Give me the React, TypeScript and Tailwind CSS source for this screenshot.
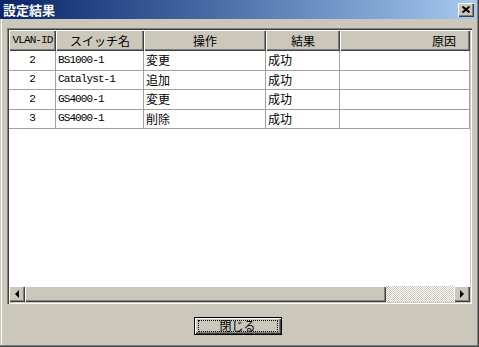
import React from "react";

const G = "#cbc7bb";

const cols = [
  { w: 47, label: "VLAN-ID", align: "center", mono: true },
  { w: 88, label: "スイッチ名", align: "center" },
  { w: 122, label: "操作", align: "center" },
  { w: 74, label: "結果", align: "center" },
  { w: 130, label: "原因", align: "right" },
];

const rows = [
  ["2", "BS1000-1", "変更", "成功", ""],
  ["2", "Catalyst-1", "追加", "成功", ""],
  ["2", "GS4000-1", "変更", "成功", ""],
  ["3", "GS4000-1", "削除", "成功", ""],
];

const raised =
  "shadow-[inset_1px_1px_#ffffff,inset_-1px_-1px_#404040,inset_-2px_-2px_#808080]";

function Arrow({ dir }: { dir: "left" | "right" }) {
  return (
    <svg width="4" height="8" viewBox="0 0 4 8">
      {dir === "left" ? (
        <polygon points="4,0 0,4 4,8" fill="#000" />
      ) : (
        <polygon points="0,0 4,4 0,8" fill="#000" />
      )}
    </svg>
  );
}

export default function App() {
  return (
    <div
      className="w-[479px] h-[347px] flex flex-col overflow-hidden shadow-[inset_-1px_-1px_#404040,inset_-2px_-2px_#808080,inset_1px_1px_#cbc7bb,inset_2px_2px_#ffffff]"
      style={{ background: G, fontFamily: '"Noto Sans CJK JP", sans-serif' }}
    >
      {/* title bar */}
      <div className="h-[19px] w-[477px] shrink-0 flex items-center justify-between pl-[3px] pr-[3px] bg-gradient-to-r from-[#0a246a] to-[#a6caf0]">
        <span className="text-white font-bold text-[13px] leading-none">
          設定結果
        </span>
        <div
          className={`w-[16px] h-[14px] flex items-center justify-center bg-[#cbc7bb] ${raised}`}
        >
          <svg width="8" height="7" viewBox="0 0 8 7">
            <path d="M0.5 0.5 L7.5 6.5 M7.5 0.5 L0.5 6.5" stroke="#000" strokeWidth="2" />
          </svg>
        </div>
      </div>

      {/* body */}
      <div className="flex-1 flex flex-col pl-[7px] pt-[9px]">
        {/* list view */}
        <div className="w-[465px] h-[276px] p-[2px] shadow-[inset_1px_1px_#808080,inset_2px_2px_#404040,inset_-1px_-1px_#ffffff,inset_-2px_-2px_#cbc7bb] flex flex-col">
          <div className="flex-1 bg-white overflow-hidden flex flex-col">
            {/* header */}
            <div className="flex h-[21px] shrink-0">
              {cols.map((c, i) => (
                <div
                  key={i}
                  className={`h-full flex items-center ${
                    c.align === "right" ? "justify-end pr-[14px]" : "justify-center"
                  } ${raised}`}
                  style={{ width: c.w, background: G }}
                >
                  <span
                    className={
                      c.mono
                        ? "text-[11px] leading-none text-black"
                        : "text-[12px] leading-none text-black"
                    }
                    style={
                      c.mono
                        ? { fontFamily: '"Liberation Mono", monospace', letterSpacing: "-0.9px" }
                        : undefined
                    }
                  >
                    {c.label}
                  </span>
                </div>
              ))}
            </div>
            {/* rows */}
            {rows.map((r, ri) => (
              <div key={ri} className="flex h-[19.5px] shrink-0 border-b border-[#a0a0a0]">
                {r.map((v, ci) => {
                  const latin = /^[\x00-\x7f]*$/.test(v);
                  return (
                    <div
                      key={ci}
                      className={`h-full flex items-center border-r border-[#a0a0a0] ${
                        ci === 0 ? "justify-center" : "justify-start pl-[2px]"
                      }`}
                      style={{ width: cols[ci].w }}
                    >
                      <span
                        className={
                          latin
                            ? "text-[11px] leading-none text-black"
                            : "text-[12px] leading-none text-black"
                        }
                        style={
                          latin
                            ? { fontFamily: '"Liberation Mono", monospace', letterSpacing: "-0.9px" }
                            : undefined
                        }
                      >
                        {v}
                      </span>
                    </div>
                  );
                })}
              </div>
            ))}
          </div>
          {/* horizontal scrollbar */}
          <div className="h-[16px] shrink-0 flex">
            <div
              className={`w-[16px] h-full flex items-center justify-center ${raised}`}
              style={{ background: G }}
            >
              <Arrow dir="left" />
            </div>
            <div className={`w-[361px] h-full ${raised}`} style={{ background: G }} />
            <div className="flex-1 h-full bg-[repeating-conic-gradient(#ffffff_0_25%,#cbc7bb_0_50%)] bg-[length:2px_2px]" />
            <div
              className={`w-[16px] h-full flex items-center justify-center ${raised}`}
              style={{ background: G }}
            >
              <Arrow dir="right" />
            </div>
          </div>
        </div>

        {/* button row */}
        <div className="flex justify-center pr-[7px] mt-[13px]">
          <div className="ml-[-4px] w-[88px] h-[18px] border border-black flex">
            <div
              className={`flex-1 flex items-center justify-center ${raised}`}
              style={{ background: G }}
            >
              <div className="w-[80px] h-[12px] border border-dotted border-black flex items-center justify-center">
                <span className="text-[12px] leading-none text-black">閉じる</span>
              </div>
            </div>
          </div>
        </div>
      </div>
    </div>
  );
}
